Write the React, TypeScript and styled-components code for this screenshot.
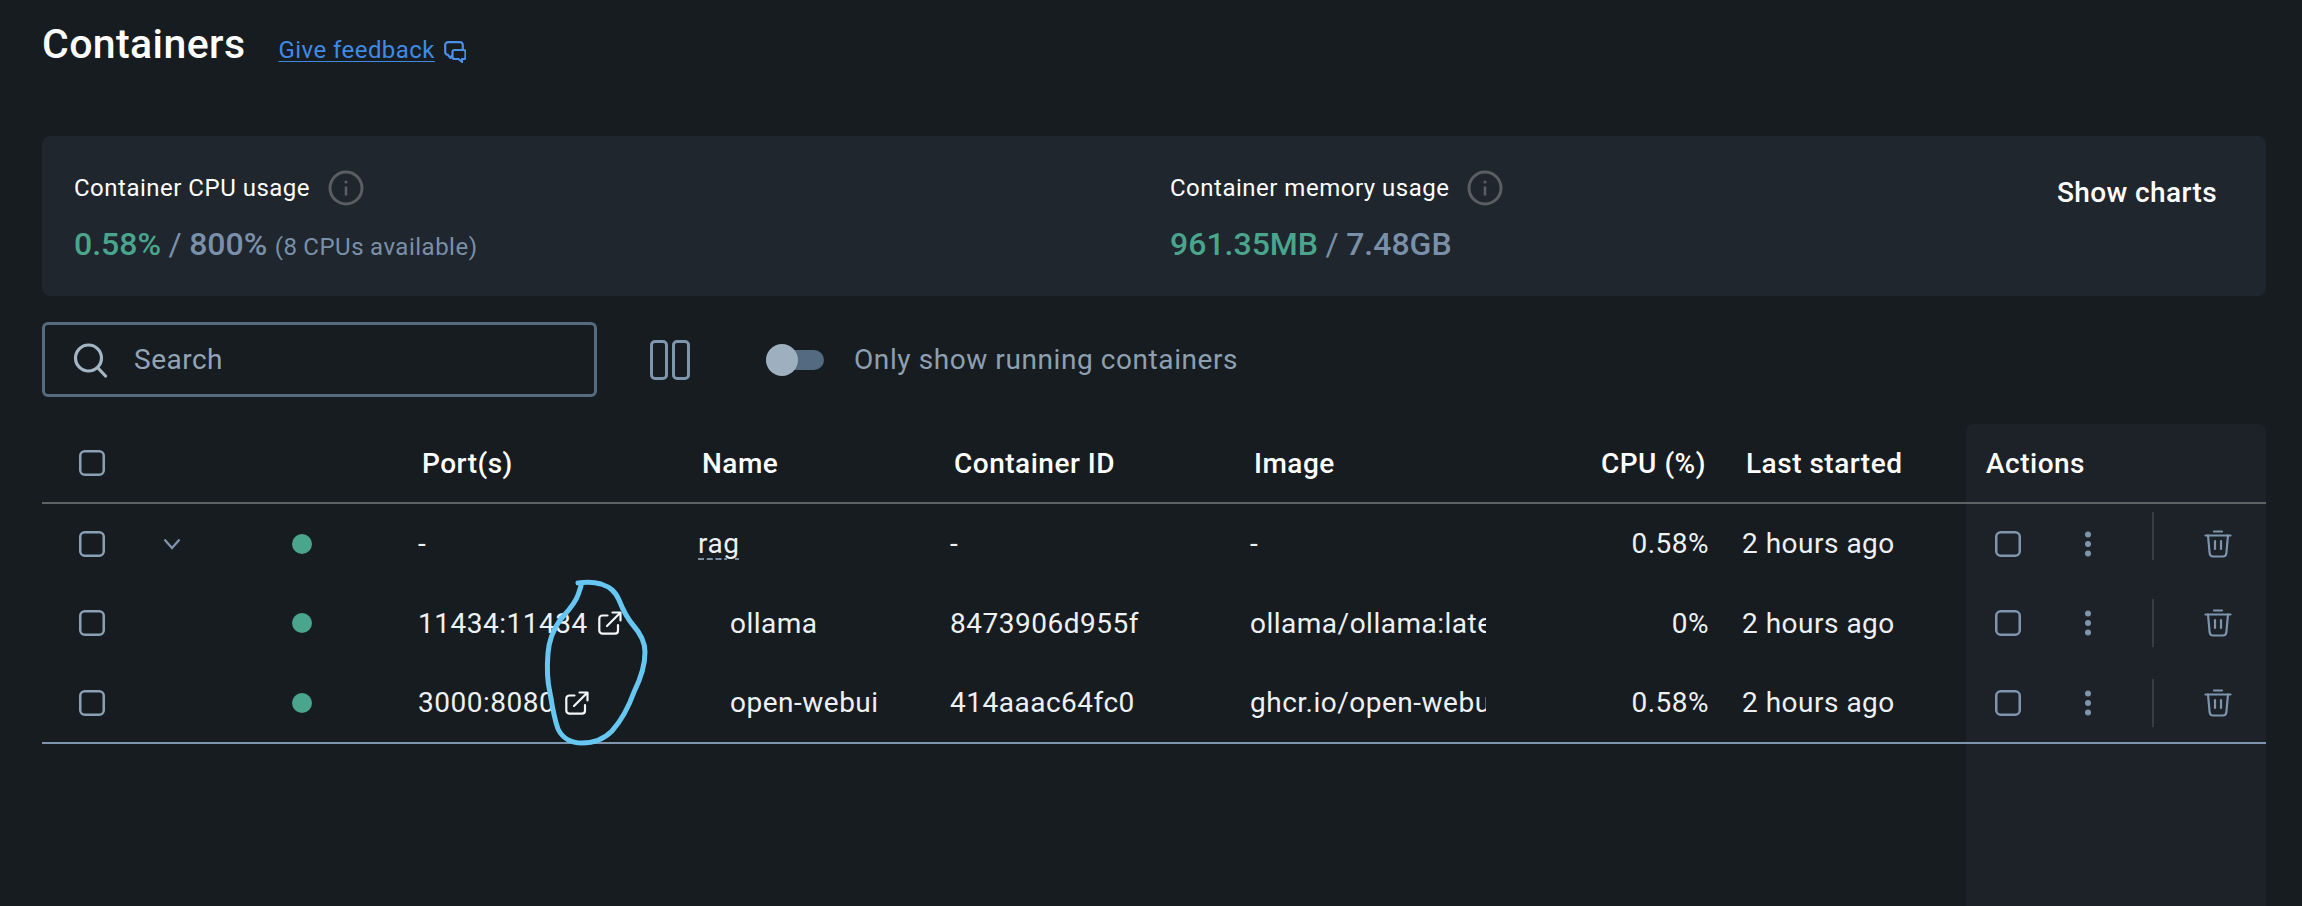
import React from "react";
import styled, { createGlobalStyle } from "styled-components";

const GlobalStyle = createGlobalStyle`
  html, body { margin: 0; padding: 0; background: #171c20; }
  body { font-family: Roboto, "Liberation Sans", sans-serif; color: #fff; overflow: hidden; }
  * { box-sizing: border-box; }
`;

const Page = styled.div`
  position: relative;
  display: flex;
  flex-direction: column;
  height: 906px;
  padding: 0 36px 0 42px;
  overflow: hidden;
`;

const Header = styled.header`
  display: flex;
  align-items: baseline;
  gap: 33px;
  height: 136px;
  padding-top: 20px;
`;

const Title = styled.h1`
  margin: 0;
  font-size: 41px;
  line-height: 48px;
  font-weight: 500;
  letter-spacing: 0.4px;
`;

const Feedback = styled.a`
  display: inline-flex;
  align-items: baseline;
  gap: 9px;
  color: #3f8be4;
  font-size: 24px;
  letter-spacing: 0.45px;
  span { text-decoration: underline; text-underline-offset: 3px; text-decoration-thickness: 1px; }
  svg { align-self: center; transform: translateY(2px); }
`;

const Usage = styled.section`
  display: grid;
  grid-template-columns: 1096px 1fr auto;
  height: 160px;
  padding: 34px 49px 0 32px;
  background: #1f262e;
  border-radius: 8px;
`;

const UsageLabel = styled.div`
  display: flex;
  align-items: center;
  gap: 18px;
  height: 36px;
  font-size: 24px;
  letter-spacing: 0.5px;
`;

const UsageValue = styled.div`
  margin-top: 18px;
  line-height: 40px;
  font-size: 32px;
  font-weight: 500;
  color: #7a90a8;
  letter-spacing: 0;
  word-spacing: -0.5px;
  white-space: nowrap;
`;

const Used = styled.span`
  color: #4aa58d;
`;

const Slash = styled.span`
  font-weight: 400;
`;

const Note = styled.span`
  font-size: 24px;
  font-weight: 400;
  letter-spacing: 0.5px;
`;

const ShowCharts = styled.button`
  height: 44px;
  padding: 0;
  background: none;
  border: 0;
  color: #fff;
  font: 500 28px Roboto, sans-serif;
  letter-spacing: 0.4px;
`;

const Toolbar = styled.div`
  display: flex;
  align-items: center;
  height: 75px;
  margin-top: 26px;
`;

const SearchBox = styled.div`
  display: flex;
  align-items: center;
  gap: 26px;
  width: 555px;
  height: 75px;
  padding-left: 27px;
  border: 3px solid #566b80;
  border-radius: 6px;
  color: #93a5b5;
  font-size: 28px;
  letter-spacing: 0.5px;
`;

const ColumnsButton = styled.div`
  display: flex;
  gap: 4px;
  margin-left: 53px;
`;

const ColumnBar = styled.div`
  width: 18px;
  height: 40px;
  border: 3.5px solid #7e95ad;
  border-radius: 5px;
`;

const Toggle = styled.div`
  position: relative;
  width: 58px;
  height: 20px;
  margin-left: 76px;
  background: #546a80;
  border-radius: 10px;
  &::before {
    content: "";
    position: absolute;
    left: 0;
    top: -6px;
    width: 32px;
    height: 32px;
    border-radius: 50%;
    background: #9eafbf;
  }
`;

const ToggleLabel = styled.span`
  margin-left: 30px;
  color: #8ea0b0;
  font-size: 28px;
  letter-spacing: 0.58px;
`;

const Table = styled.div`
  flex: 1;
  display: flex;
  margin-top: 27px;
  min-height: 0;
`;

const MainColumns = styled.div`
  flex: 1;
  min-width: 0;
`;

const ActionsColumn = styled.div`
  width: 300px;
  background: #1c2228;
  border-radius: 8px 8px 0 0;
`;

const COLUMNS = "108px 130px 138px 280px 252px 300px 236px 223px 1fr";

const HeadRow = styled.div`
  display: grid;
  grid-template-columns: ${COLUMNS};
  align-items: center;
  height: 80px;
  border-bottom: 2px solid #5e6263;
  font-size: 28px;
  font-weight: 500;
  letter-spacing: 0.5px;
`;

const BodyRow = styled.div`
  display: grid;
  grid-template-columns: ${COLUMNS};
  align-items: center;
  height: 79.5px;
  font-size: 28px;
  letter-spacing: 0.5px;
  color: #eef1f4;
`;

const Foot = styled.div`
  height: 2px;
  margin-top: -0.5px;
  background: #7e95ad;
`;

const CheckCell = styled.div`
  display: flex;
  padding-left: 37px;
`;

const ChevronCell = styled.div`
  display: flex;
  padding-left: 13px;
`;

const DotCell = styled.div`
  padding-left: 12px;
`;

const StatusDot = styled.div`
  width: 20px;
  height: 20px;
  border-radius: 50%;
  background: #4aa58d;
`;

const HeadCell = styled.div<{ $inset?: number; $right?: boolean; $outdent?: number }>`
  padding-left: ${(p) => p.$inset ?? 4}px;
  padding-right: ${(p) => p.$outdent ?? 0}px;
  text-align: ${(p) => (p.$right ? "right" : "left")};
  white-space: nowrap;
`;

const Cell = styled.div<{ $inset?: number; $right?: boolean }>`
  display: flex;
  align-items: center;
  justify-content: ${(p) => (p.$right ? "flex-end" : "flex-start")};
  gap: 10px;
  padding-left: ${(p) => p.$inset ?? 0}px;
  white-space: nowrap;
  overflow: hidden;
`;

const StackName = styled.span`
  text-decoration: underline dashed #7a8ea6 2px;
  text-underline-offset: 5px;
`;

const ActionsHead = styled.div`
  display: flex;
  align-items: center;
  height: 80px;
  padding-left: 20px;
  border-bottom: 2px solid #5e6263;
  font-size: 28px;
  font-weight: 500;
  letter-spacing: 0.5px;
`;

const ActionsRow = styled.div`
  display: grid;
  grid-template-columns: 89px 40px 60px 1fr;
  align-items: center;
  height: 79.5px;
  padding-left: 29px;
`;

const DividerCell = styled.div<{ $raised?: boolean }>`
  display: flex;
  justify-content: center;
  transform: translate(-1px, ${(p) => (p.$raised ? "-8px" : "0")});
`;

const Divider = styled.div`
  width: 2px;
  height: 48px;
  background: #373d42;
`;

const TrashSlot = styled.div`
  display: flex;
  padding-left: 20px;
`;

const Scribble = styled.svg`
  position: absolute;
  left: 540px;
  top: 575px;
  pointer-events: none;
`;

const CheckBox = ({ color = "#8ba0b5" }: { color?: string }) => (
  <svg width="26" height="26" viewBox="0 0 26 26" fill="none">
    <rect x="1.25" y="1.25" width="23.5" height="23.5" rx="4.5" stroke={color} strokeWidth="2.5" />
  </svg>
);

const InfoIcon = () => (
  <svg width="36" height="36" viewBox="0 0 36 36" fill="none">
    <circle cx="18" cy="18" r="16" stroke="#5a5e64" strokeWidth="3" />
    <circle cx="18" cy="12" r="1.6" fill="#5a5e64" />
    <rect x="16.7" y="16.5" width="2.6" height="9" fill="#5a5e64" />
  </svg>
);

const ChatIcon = () => (
  <svg width="22" height="22" viewBox="0 0 22 22" fill="none" stroke="#4a90e6" strokeWidth="2.2" strokeLinejoin="round">
    <path d="M18.8 8.5V4C18.8 2.3 17.7 1.2 16 1.2H4.2C2.4 1.2 1.2 2.3 1.2 4V11C1.2 12.6 2.2 13.7 3.8 13.8L6.5 17L8 14.5" />
    <path d="M10.5 9H19.5C20.7 9 21.5 9.8 21.5 11V16C21.5 17.2 20.7 18 19.5 18H18V21L14.5 18H10.5C9.2 18 8.5 17.2 8.5 16V11C8.5 9.8 9.2 9 10.5 9Z" />
  </svg>
);

const SearchIcon = () => (
  <svg width="36" height="36" viewBox="0 0 36 36" fill="none" stroke="#a3b6c5" strokeWidth="3.2" strokeLinecap="round">
    <circle cx="16.5" cy="16" r="13" />
    <path d="M26 26L33.5 34" />
  </svg>
);

const Chevron = () => (
  <svg width="18" height="12" viewBox="0 0 18 12" fill="none" stroke="#7e95ad" strokeWidth="2.2">
    <path d="M1.5 1.5L9 10L16.5 1.5" />
  </svg>
);

const OpenIcon = () => (
  <svg width="24" height="24" viewBox="0 0 24 24" fill="none" stroke="#f4f6f8" strokeWidth="2.2" strokeLinecap="round" strokeLinejoin="round">
    <path d="M9.5 4.5H4.5C2.8 4.5 1.3 5.8 1.3 7.5V19.5C1.3 21.3 2.8 22.7 4.5 22.7H17C18.8 22.7 20 21.3 20 19.5V14" />
    <path d="M9 15L22 2M14.5 1.5H22.5V9.5" />
  </svg>
);

const DotsIcon = () => (
  <svg width="8" height="26" viewBox="0 0 8 26" fill="#7e95ad">
    <circle cx="4" cy="3.5" r="3" />
    <circle cx="4" cy="13" r="3" />
    <circle cx="4" cy="22.5" r="3" />
  </svg>
);

const TrashIcon = () => (
  <svg width="28" height="28" viewBox="0 0 28 28" fill="none" stroke="#7e95ad" strokeWidth="2.2" strokeLinecap="round">
    <path d="M10 1.5H18" />
    <path d="M1.5 5.5H26.5" />
    <path d="M4 5.5L5.6 23C5.8 25.2 7 26.5 9.2 26.5H18.8C21 26.5 22.2 25.2 22.4 23L24 5.5" />
    <path d="M11 11V19M17 11V19" />
  </svg>
);

type Row = {
  port?: string;
  name: string;
  child?: boolean;
  id: string;
  image: string;
  cpu: string;
};

const rows: Row[] = [
  { name: "rag", id: "-", image: "-", cpu: "0.58%" },
  { port: "11434:11434", name: "ollama", child: true, id: "8473906d955f", image: "ollama/ollama:latest", cpu: "0%" },
  { port: "3000:8080", name: "open-webui", child: true, id: "414aaac64fc0", image: "ghcr.io/open-webui", cpu: "0.58%" },
];

export default function App() {
  return (
    <Page>
      <GlobalStyle />
      <Header>
        <Title>Containers</Title>
        <Feedback>
          <span>Give feedback</span>
          <ChatIcon />
        </Feedback>
      </Header>

      <Usage>
        <div>
          <UsageLabel>
            Container CPU usage <InfoIcon />
          </UsageLabel>
          <UsageValue>
            <Used>0.58%</Used> <Slash>/</Slash> 800% <Note>(8 CPUs available)</Note>
          </UsageValue>
        </div>
        <div>
          <UsageLabel>
            Container memory usage <InfoIcon />
          </UsageLabel>
          <UsageValue>
            <Used>961.35MB</Used> <Slash>/</Slash> 7.48GB
          </UsageValue>
        </div>
        <ShowCharts>Show charts</ShowCharts>
      </Usage>

      <Toolbar>
        <SearchBox>
          <SearchIcon />
          Search
        </SearchBox>
        <ColumnsButton>
          <ColumnBar />
          <ColumnBar />
        </ColumnsButton>
        <Toggle />
        <ToggleLabel>Only show running containers</ToggleLabel>
      </Toolbar>

      <Table>
        <MainColumns>
          <HeadRow>
            <CheckCell>
              <CheckBox />
            </CheckCell>
            <div />
            <div />
            <HeadCell>Port(s)</HeadCell>
            <HeadCell $inset={4}>Name</HeadCell>
            <HeadCell $inset={4}>Container ID</HeadCell>
            <HeadCell>Image</HeadCell>
            <HeadCell $right $outdent={3}>CPU (%)</HeadCell>
            <HeadCell $inset={37}>Last started</HeadCell>
          </HeadRow>
          {rows.map((row) => (
            <BodyRow key={row.name}>
              <CheckCell>
                <CheckBox />
              </CheckCell>
              <ChevronCell>{!row.child && <Chevron />}</ChevronCell>
              <DotCell>
                <StatusDot />
              </DotCell>
              <Cell>
                {row.port ?? "-"}
                {row.port && <OpenIcon />}
              </Cell>
              <Cell $inset={row.child ? 32 : 0}>
                {row.child ? row.name : <StackName>{row.name}</StackName>}
              </Cell>
              <Cell>{row.id}</Cell>
              <Cell>{row.image}</Cell>
              <Cell $right>{row.cpu}</Cell>
              <Cell $inset={33}>2 hours ago</Cell>
            </BodyRow>
          ))}
          <Foot />
        </MainColumns>
        <ActionsColumn>
          <ActionsHead>Actions</ActionsHead>
          {rows.map((row, index) => (
            <ActionsRow key={row.name}>
              <CheckBox color="#7e95ad" />
              <DotsIcon />
              <DividerCell $raised={index === 0}>
                <Divider />
              </DividerCell>
              <TrashSlot>
                <TrashIcon />
              </TrashSlot>
            </ActionsRow>
          ))}
          <Foot />
        </ActionsColumn>
      </Table>

      <Scribble width="112" height="175" viewBox="540 575 112 175" fill="none">
        <path
          d="M578 583C586 582 594 582 601 584C610 587 615 591 619 600C623 610 627 618 633 625C641 634 645 642 645 652C645 668 640 680 634 692C629 706 620 722 612 731C604 739 593 743 582 743C572 743 563 739 558 729C554 718 552 705 550 693C547 680 547 665 548 653C549 641 553 630 560 620C567 612 575 604 578 595L581 586"
          stroke="#66c7f2"
          strokeWidth="5"
          strokeLinecap="round"
          strokeLinejoin="round"
        />
      </Scribble>
    </Page>
  );
}
